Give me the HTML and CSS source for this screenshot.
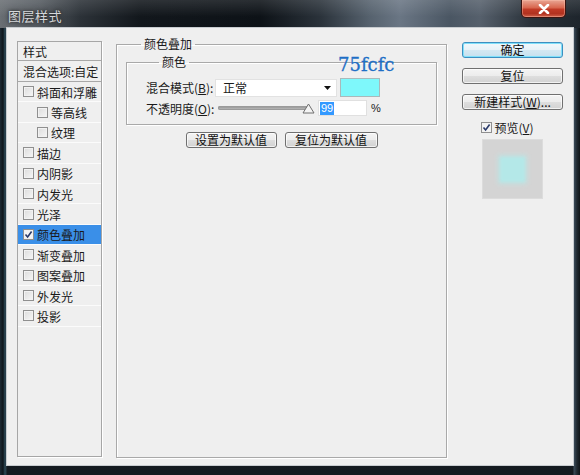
FILE: index.html
```html
<!DOCTYPE html>
<html lang="zh">
<head>
<meta charset="utf-8">
<title>图层样式</title>
<link rel="stylesheet" href="styles.css">
</head>
<body>
<div class="window">
  <div class="titlebar">
    <span class="title">图层样式</span>
    <span class="close"><svg width="14" height="10" viewBox="0 0 14 10"><path d="M3 1 L11 9 M11 1 L3 9" stroke="#fff" stroke-width="2.6" stroke-linecap="round"/></svg></span>
  </div>
  <div class="client">
    <div class="styles-list">
      <div class="li head">样式</div>
      <div class="li head2">混合选项:自定</div>
      <div class="li"><span class="cb"></span>斜面和浮雕</div>
      <div class="li sub"><span class="cb"></span>等高线</div>
      <div class="li sub"><span class="cb"></span>纹理</div>
      <div class="li"><span class="cb"></span>描边</div>
      <div class="li"><span class="cb"></span>内阴影</div>
      <div class="li"><span class="cb"></span>内发光</div>
      <div class="li"><span class="cb"></span>光泽</div>
      <div class="li active"><span class="cb checked"><svg width="9" height="9" viewBox="0 0 9 9"><path d="M1.5 4.5 L3.6 7 L7.6 1.5" fill="none" stroke="#2a3a6a" stroke-width="1.6"/></svg></span>颜色叠加</div>
      <div class="li"><span class="cb"></span>渐变叠加</div>
      <div class="li"><span class="cb"></span>图案叠加</div>
      <div class="li"><span class="cb"></span>外发光</div>
      <div class="li"><span class="cb"></span>投影</div>
    </div>

    <fieldset class="group">
      <legend>颜色叠加</legend>
      <fieldset class="inner">
        <legend>颜色</legend>
        <span class="hex">75fcfc</span>
        <div class="row">
          <span class="label">混合模式(<u>B</u>):</span>
          <span class="select">正常<svg width="7" height="4" viewBox="0 0 7 4"><path d="M0 0 H7 L3.5 4 Z" fill="#111"/></svg></span>
          <span class="swatch"></span>
        </div>
        <div class="row row2">
          <span class="label">不透明度(<u>O</u>):</span>
          <span class="slider">
            <span class="track"></span>
            <svg class="thumb" width="13" height="11" viewBox="0 0 13 11"><path d="M6.5 1 L12 10 H1 Z" fill="#f4f4f4" stroke="#6e6e6e" stroke-width="1"/></svg>
          </span>
          <span class="input"><span class="sel">99</span></span>
          <span class="pct">%</span>
        </div>
      </fieldset>
      <div class="btnrow">
        <button class="btn wide">设置为默认值</button>
        <button class="btn wide2">复位为默认值</button>
      </div>
    </fieldset>

    <div class="side">
      <button class="btn side-btn primary">确定</button>
      <button class="btn side-btn">复位</button>
      <button class="btn side-btn">新建样式(<u>W</u>)...</button>
      <div class="preview-check"><span class="cb checked"><svg width="9" height="9" viewBox="0 0 9 9"><path d="M1.5 4.5 L3.6 7 L7.6 1.5" fill="none" stroke="#2a3a6a" stroke-width="1.6"/></svg></span>预览(<u>V</u>)</div>
      <div class="preview"><span class="swatch-blur"></span></div>
    </div>
  </div>
</div>
</body>
</html>
```

FILE: styles.css
```css
html, body {
  margin: 0;
  padding: 0;
  background: #1a2028;
}
body {
  font-family: "Noto Sans CJK SC", "Liberation Sans", sans-serif;
  font-size: 12px;
  color: #1a1a1a;
}
.window {
  width: 580px;
  height: 475px;
  box-sizing: border-box;
  display: flex;
  flex-direction: column;
  background:
    linear-gradient(90deg, #1d2a34 0, #0f161c 3px, #2d4a58 5px, #1a2229 7px, transparent 7px, transparent 573px, #3a4a58 574px, #1f2830 577px, #101418 580px),
    linear-gradient(180deg, #303a44 0, #1c242c 40%, #141a20 100%);
  padding-bottom: 10px;
}
.titlebar {
  height: 28px;
  flex: none;
  display: flex;
  align-items: flex-start;
  padding: 0 14px 0 8px;
  background:
    linear-gradient(180deg, rgba(255,255,255,0.12) 0, rgba(255,255,255,0) 60%),
    linear-gradient(90deg, #6a6f74 0, #545a60 40px, #2c3238 80px, #12171c 140px, #0d1217 260px, #2a323a 320px, #56626e 370px, #6a7684 400px, #4a5663 450px, #56606c 480px, #2a323a 530px, #1e252c 580px);
}
.title {
  margin-top: 6px;
  font-size: 13px;
  color: #d4d7da;
  text-shadow: 0 0 3px #222, 0 0 6px #333;
  letter-spacing: 0.5px;
}
.close {
  margin-left: auto;
  width: 45px;
  height: 18px;
  box-sizing: border-box;
  border: 1px solid #3c1410;
  border-top: none;
  border-radius: 0 0 5px 5px;
  background: linear-gradient(180deg, #e9a694 0, #d8674f 45%, #c03a26 55%, #b13220 80%, #d0604a 100%);
  display: flex;
  align-items: center;
  justify-content: center;
  box-shadow: inset 0 0 0 1px rgba(255,200,180,0.4);
}
.client {
  flex: 1;
  margin: 0 7px 0 7px;
  background: #efefef;
  display: flex;
  align-items: flex-start;
  box-shadow: 0 0 0 1px #c8ccd0;
}

/* left list */
.styles-list {
  margin: 13px 0 0 10px;
  width: 85px;
  height: 416px;
  box-sizing: border-box;
  border: 1px solid #a6a6a6;
  box-shadow: 1px 1px 0 #fff;
  background: #efefef;
}
.li {
  height: 20.4px;
  box-sizing: border-box;
  border-bottom: 1px solid #fbfbfb;
  display: flex;
  align-items: center;
  padding-left: 5px;
  padding-top: 2px;
  white-space: nowrap;
  line-height: 1;
}
.li .cb {
  margin-top: -2px;
}
.li.head {
  height: 19px;
  border-bottom: 1px solid #a8a8a8;
}
.li.head2 {
  height: 21px;
  border-bottom: 1px solid #a8a8a8;
}
.li.sub {
  padding-left: 19px;
}
.li.active {
  background: #3a8fe8;
}
.cb {
  width: 11px;
  height: 11px;
  box-sizing: border-box;
  border: 1px solid #8f8f8f;
  background: linear-gradient(135deg, #dcdcdc, #f6f6f6);
  box-shadow: inset 0 0 0 1px #f2f2f2;
  margin-right: 3px;
  display: inline-flex;
  align-items: center;
  justify-content: center;
  flex: none;
}
.cb.checked {
  background: #f4f4f4;
}

/* group */
fieldset {
  margin: 0;
  min-width: 0;
}
.group {
  margin: 9px 0 0 14px;
  width: 331px;
  height: 421px;
  box-sizing: border-box;
  border: 1px solid #a9a9a9;
  box-shadow: inset 1px 1px 0 #fff, 1px 1px 0 #fff;
  padding: 4px 9px 0 9px;
}
legend {
  padding: 0 3px;
  line-height: 14px;
  font-size: 12px;
}
.group > legend {
  margin-left: 15px;
}
.inner {
  position: relative;
  width: 311px;
  height: 70px;
  box-sizing: border-box;
  border: 1px solid #a9a9a9;
  box-shadow: inset 1px 1px 0 #fff, 1px 1px 0 #fff;
  padding: 9px 0 0 19px;
}
.inner > legend {
  margin-left: 13px;
}
.hex {
  position: absolute;
  left: 211px;
  top: -14px;
  font-family: "DejaVu Serif", "Liberation Serif", serif;
  font-size: 18px;
  color: #1f6fc6;
  line-height: 20px;
  -webkit-text-stroke: 0.3px #1f6fc6;
}
.row {
  display: flex;
  align-items: center;
  height: 19px;
}
.row2 {
  margin-top: 3px;
  height: 16px;
}
.label {
  width: 69px;
  flex: none;
  white-space: nowrap;
}
.select {
  width: 122px;
  height: 18px;
  box-sizing: border-box;
  background: #fff;
  border: 1px solid #e2e2e2;
  display: flex;
  align-items: center;
  justify-content: space-between;
  padding: 0 5px 0 7px;
}
.swatch {
  margin-left: 3px;
  width: 40px;
  height: 19px;
  box-sizing: border-box;
  background: #7ef8fb;
  border: 1px solid #a9b9bb;
}
.slider {
  margin-left: 3px;
  width: 97px;
  height: 16px;
  display: flex;
  align-items: center;
  position: relative;
}
.track {
  width: 90px;
  height: 4px;
  border-radius: 2px;
  background: linear-gradient(180deg, #8a8a8a, #c4c4c4);
  box-shadow: inset 0 0 0 1px #9a9a9a;
}
.thumb {
  position: absolute;
  left: 84px;
  top: 3px;
}
.input {
  margin-left: 3px;
  width: 49px;
  height: 16px;
  box-sizing: border-box;
  background: #fff;
  border: 1px solid #e0e0e0;
  display: flex;
  align-items: center;
  padding-left: 1px;
}
.sel {
  background: #3399ff;
  color: #fff;
  font-family: "Liberation Sans", sans-serif;
  font-size: 11px;
  line-height: 13px;
  padding: 0 1px;
}
.pct {
  margin-left: 4px;
  font-family: "Liberation Sans", sans-serif;
  font-size: 11px;
}
.btnrow {
  display: flex;
  justify-content: center;
  gap: 8px;
  margin-top: 7px;
}
.btn {
  font-family: "Noto Sans CJK SC", "Liberation Sans", sans-serif;
  font-size: 12px;
  line-height: 1;
  height: 16px;
  padding: 0;
  box-sizing: border-box;
  border: 1px solid #707070;
  border-radius: 3px;
  background: linear-gradient(180deg, #f4f4f4 0, #ececec 50%, #dedede 51%, #d2d2d2 100%);
  box-shadow: inset 0 0 0 1px rgba(255,255,255,0.7);
  color: #111;
  display: flex;
  align-items: center;
  justify-content: center;
  white-space: nowrap;
}
.wide { width: 91px; }
.wide2 { width: 93px; }

/* side */
.side {
  margin: 14px 0 0 15px;
  width: 101px;
  display: flex;
  flex-direction: column;
  align-items: center;
}
.side-btn {
  width: 101px;
  margin-bottom: 10px;
}
.primary {
  border-color: #3c8fc0;
  box-shadow: inset 0 0 0 1px #7fe0fa;
  background: linear-gradient(180deg, #f2f8fb 0, #e6f2f8 50%, #d4e8f2 51%, #c6e0ee 100%);
}
.preview-check {
  display: flex;
  align-items: center;
  margin-top: 1px;
  margin-right: 10px;
  height: 12px;
  white-space: nowrap;
}
.preview-check .cb {
  margin-right: 2px;
}
.preview {
  margin-top: 6px;
  width: 61px;
  height: 60px;
  background: #d4d4d4;
  border: 1px solid #dcdcdc;
  box-sizing: border-box;
  display: flex;
  align-items: center;
  justify-content: center;
}
.swatch-blur {
  width: 25px;
  height: 25px;
  background: #b4e8e8;
  box-shadow: 0 0 4px 2px #c0e2e2;
  filter: blur(1.5px);
}
```
